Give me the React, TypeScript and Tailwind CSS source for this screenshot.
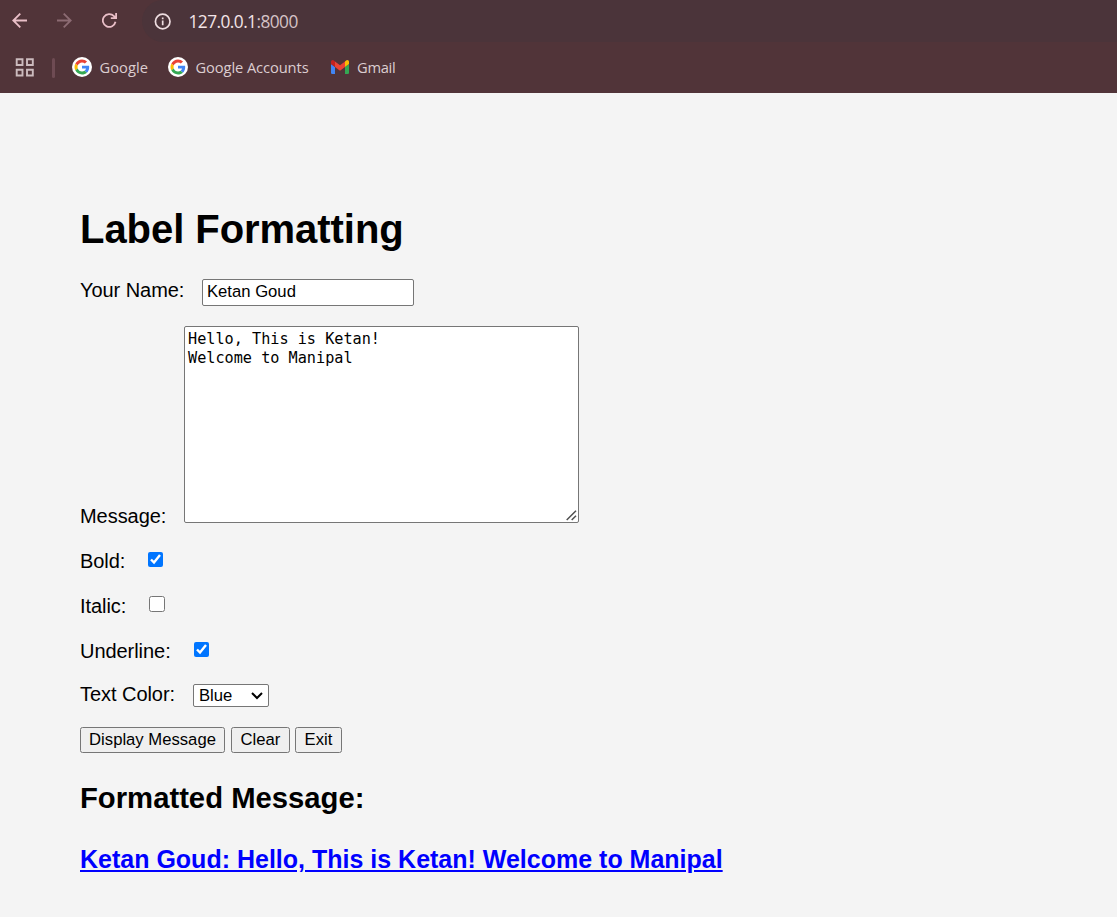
import type { ReactNode } from 'react';

function GoogleMark() {
  return (
    <svg width="20" height="20" viewBox="0 0 20 20" className="shrink-0">
      <circle cx="10" cy="10" r="10" fill="#fff" />
      <g transform="translate(2.5 2.5) scale(0.3125)">
        <path fill="#EA4335" d="M24 9.5c3.54 0 6.71 1.22 9.21 3.6l6.85-6.85C35.9 2.38 30.47 0 24 0 14.62 0 6.51 5.38 2.56 13.22l7.98 6.19C12.43 13.72 17.74 9.5 24 9.5z" />
        <path fill="#4285F4" d="M46.98 24.55c0-1.57-.15-3.09-.38-4.55H24v9.02h12.94c-.58 2.96-2.26 5.48-4.78 7.18l7.73 6c4.51-4.18 7.09-10.36 7.09-17.65z" />
        <path fill="#FBBC05" d="M10.53 28.59c-.48-1.45-.76-2.99-.76-4.59s.27-3.14.76-4.59l-7.98-6.19C.92 16.46 0 20.12 0 24c0 3.88.92 7.54 2.56 10.78l7.97-6.19z" />
        <path fill="#34A853" d="M24 48c6.48 0 11.93-2.13 15.89-5.81l-7.73-6c-2.15 1.45-4.92 2.3-8.16 2.3-6.26 0-11.57-4.22-13.47-9.91l-7.98 6.19C6.51 42.62 14.62 48 24 48z" />
      </g>
    </svg>
  );
}

function GmailMark() {
  return (
    <svg width="18" height="14" viewBox="0 0 18 14" className="shrink-0">
      <path fill="#4285F4" d="M0 4 4 7v7H1.2A1.2 1.2 0 0 1 0 12.8z" />
      <path fill="#34A853" d="m18 4-4 3v7h2.8a1.2 1.2 0 0 0 1.2-1.2z" />
      <path fill="#EA4335" d="M4 1.4 9 5.2l5-3.8V7L9 10.7 4 7z" />
      <path fill="#C5221F" d="M0 4V2C0 .2 1.8-.5 3.2.7L4 1.4V7z" />
      <path fill="#FBBC04" d="M18 4V2c0-1.8-1.8-2.5-3.2-1.3l-.8.7V7z" />
    </svg>
  );
}

function BrowserBar() {
  return (
    <header className="h-[93px] bg-[#513439] font-['Open_Sans',sans-serif]">
      <div className="flex h-[42px] items-center">
        <div className="flex w-[142px] shrink-0 items-center pl-3">
          <svg width="16" height="16" viewBox="0 0 16 16" fill="none" stroke="#eabfc8" strokeWidth="1.8" className="shrink-0">
            <path d="M15 7.5H1.5M8.3.6 1.3 7.5l7 6.9" />
          </svg>
          <svg width="16" height="16" viewBox="0 0 16 16" fill="none" stroke="#8c6b73" strokeWidth="1.8" className="ml-[29px] shrink-0">
            <path d="M0 7.5h13.5M6.7.6l7 6.9-7 6.9" />
          </svg>
          <svg width="16" height="16" viewBox="0 0 16 16" fill="none" stroke="#eabfc8" strokeWidth="1.8" className="ml-[29px] shrink-0">
            <path d="M13.5 8.8A6.4 6.4 0 1 1 12 3.2L13.6 5M14.1 0v5.2H8.8" />
          </svg>
        </div>
        <div className="flex h-[42px] grow items-center rounded-l-[21px] bg-[#4b343a] pl-3">
          <svg width="17" height="17" viewBox="0 0 17 17" fill="none" stroke="#eedde0" strokeWidth="1.7" className="shrink-0">
            <circle cx="8.7" cy="8.5" r="7.3" />
            <path d="M8.7 7.6v4.6M8.7 4.5v1.8" />
          </svg>
          <div className="ml-[17.5px] pt-px text-[17.3px] tracking-[-0.55px] text-[#f3e4e7]">
            127.0.0.1<span className="text-[#d5c2c6]">:8000</span>
          </div>
        </div>
      </div>
      <nav className="flex h-[51px] items-center pl-[15px] text-[14.7px] tracking-[-0.1px] text-[#dccdd0]">
        <svg width="20" height="19" viewBox="0 0 20 19" fill="none" stroke="#ccbbbe" strokeWidth="1.9" className="shrink-0">
          <path d="M1.7 1.2h5.8v5.8H1.7zM12 1.2h5.8v5.8H12zM1.7 11.7h5.8v5.8H1.7zM12 11.7h5.8v5.8H12z" />
        </svg>
        <div className="ml-[17px] h-5 w-[2.5px] rounded-full bg-[#6e4b53]" />
        <div className="ml-[17.5px] flex w-24 items-center gap-[7.5px] tracking-[0.05px]"><GoogleMark />Google</div>
        <div className="flex w-[163px] items-center gap-[7.5px] whitespace-nowrap"><GoogleMark />Google Accounts</div>
        <div className="flex items-center gap-[8px] tracking-[-0.3px]"><GmailMark />Gmail</div>
      </nav>
    </header>
  );
}

function Label({ children, className }: { children: ReactNode; className: string }) {
  return <label className={`shrink-0 text-[20px] leading-[23px] tracking-[-0.05px] whitespace-nowrap ${className}`}>{children}</label>;
}

function Button({ children, className }: { children: ReactNode; className: string }) {
  return (
    <button className={`h-[26px] rounded-[2.5px] border border-[#767676] bg-[#efefef] text-[16.67px] leading-[22px] whitespace-nowrap ${className}`}>
      {children}
    </button>
  );
}

export default function App() {
  return (
    <div className="h-[917px] w-full overflow-hidden bg-[#f4f4f4] font-['Liberation_Sans',Arial,sans-serif] text-black">
      <BrowserBar />
      <main className="pt-[113px] pl-20">
        <h1 className="h-[73px] text-[40px] leading-[46px] font-bold tracking-[-0.05px]">Label Formatting</h1>
        <div className="flex h-[47px]">
          <Label className="w-[122px]">Your Name:</Label>
          <input defaultValue="Ketan Goud" className="h-[27px] w-[212px] rounded-[2px] border border-[#767676] bg-white px-1 pb-[2px] text-[16.67px] outline-none" />
        </div>
        <div className="flex h-[224px]">
          <Label className="w-[104px] pt-[179px]">Message:</Label>
          <div className="relative h-[197px] w-[395px]">
            <textarea
              spellCheck={false}
              defaultValue={'Hello, This is Ketan!\nWelcome to Manipal'}
              className="block h-[197px] w-[395px] resize-none rounded-[2px] border border-[#767676] bg-white px-[3px] py-[3px] font-['DejaVu_Sans_Mono',monospace] text-[15.2px] leading-[19px] outline-none"
            />
            <svg width="11" height="11" viewBox="0 0 11 11" fill="none" stroke="#505050" strokeWidth="1.5" className="pointer-events-none absolute right-[2px] bottom-[2px]">
              <path d="M.7 10 10 .7M5.7 10 10 5.7" />
            </svg>
          </div>
        </div>
        <div className="flex h-[45px]">
          <Label className="w-[68px]">Bold:</Label>
          <input type="checkbox" defaultChecked className="mt-[2px] size-[15px]" />
        </div>
        <div className="flex h-[45px]">
          <Label className="w-[69px]">Italic:</Label>
          <input type="checkbox" className="mt-px size-4" />
        </div>
        <div className="flex h-[44px]">
          <Label className="w-[114px]">Underline:</Label>
          <input type="checkbox" defaultChecked className="mt-[2px] size-[15px]" />
        </div>
        <div className="flex h-[43px]">
          <Label className="-mt-px w-[113px]">Text Color:</Label>
          <div className="relative h-[23px] w-[76px]">
            <select defaultValue="Blue" className="block h-[23px] w-[76px] appearance-none rounded-[2px] border border-[#767676] bg-white pl-[5px] text-[16.67px] leading-[21px] outline-none">
              <option>Blue</option>
              <option>Red</option>
              <option>Green</option>
            </select>
            <svg width="12" height="8" viewBox="0 0 12 8" fill="none" stroke="#000" strokeWidth="2" className="pointer-events-none absolute top-[8px] right-[6px]">
              <path d="m1 1 5 5 5-5" />
            </svg>
          </div>
        </div>
        <div className="flex h-[54px]">
          <Button className="w-[145px]">Display Message</Button>
          <Button className="ml-[6px] w-[59px]">Clear</Button>
          <Button className="ml-[5px] w-[47px]">Exit</Button>
        </div>
        <h2 className="h-[64px] text-[29.25px] leading-[34px] font-bold">Formatted Message:</h2>
        <p className="text-[25px] leading-[28px] font-bold whitespace-nowrap text-[#0000ff] underline">
          Ketan Goud: Hello, This is Ketan! Welcome to Manipal
        </p>
      </main>
    </div>
  );
}
